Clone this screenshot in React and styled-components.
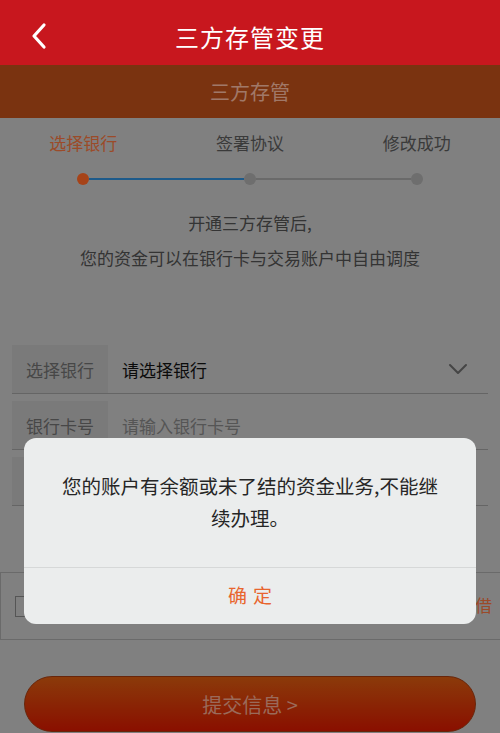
import styled, { createGlobalStyle } from "styled-components";

const GlobalStyle = createGlobalStyle`
  * { box-sizing: border-box; }
  body {
    margin: 0;
    font-family: "Noto Sans CJK SC", "Noto Sans", sans-serif;
    background: #fff;
  }
`;

const Page = styled.div`
  position: relative;
  width: 500px;
  height: 733px;
  overflow: hidden;
  background: #c5c5c5;
`;

const Header = styled.header`
  display: grid;
  grid-template-columns: 80px 1fr 80px;
  align-items: center;
  height: 65px;
  padding-top: 7px;
  background: #c8171e;
  color: #fff;
`;

const BackButton = styled.div`
  display: flex;
  align-items: center;
  padding-left: 30px;
  height: 100%;
`;

const Title = styled.h1`
  margin: 0;
  text-align: center;
  font-size: 24px;
  font-weight: 400;
  letter-spacing: 1px;
`;

const TabBar = styled.div`
  display: flex;
  align-items: center;
  justify-content: center;
  height: 53px;
  background: #bc4f19;
  color: #f6b9a0;
  font-size: 20px;
`;

const Steps = styled.section`
  padding-top: 13px;
`;

const StepLabels = styled.div`
  display: grid;
  grid-template-columns: repeat(3, 1fr);
  font-size: 17px;
  line-height: 24px;
  text-align: center;
`;

const StepLabel = styled.span`
  color: ${(p) => (p.$active ? "#ee7440" : "#5a5a5a")};
`;

const Track = styled.div`
  display: flex;
  align-items: center;
  padding: 0 77px;
  margin-top: 18px;
`;

const Dot = styled.span`
  width: 12px;
  height: 12px;
  border-radius: 50%;
  background: ${(p) => (p.$active ? "#ff6725" : "#a9a9a9")};
  flex-shrink: 0;
`;

const Line = styled.span`
  flex: 1;
  height: 2px;
  background: ${(p) => (p.$done ? "#2d8bd4" : "#a3a3a3")};
`;

const Intro = styled.p`
  margin: 20px 0 0;
  text-align: center;
  font-size: 17px;
  line-height: 35px;
  color: #505050;
`;

const Form = styled.div`
  margin: 70px 12px 0;
`;

const Row = styled.div`
  display: flex;
  align-items: center;
  height: 49px;
  margin-top: 7px;
  border-bottom: 1px solid #9c9c9c;
  &:first-child {
    margin-top: 0;
  }
`;

const RowLabel = styled.div`
  display: flex;
  align-items: center;
  width: 96px;
  height: 48px;
  padding-left: 14px;
  background: #bcbcbc;
  color: #6e6e6e;
  font-size: 17px;
`;

const RowValue = styled.div`
  flex: 1;
  padding-left: 14px;
  font-size: 17px;
  color: ${(p) => (p.$placeholder ? "#838383" : "#111")};
`;

const Chevron = styled.div`
  display: flex;
  padding-right: 20px;
`;

const AgreeRow = styled.div`
  display: flex;
  align-items: center;
  height: 68px;
  margin-top: 66px;
  padding: 0 8px 0 14px;
  border-top: 1px solid #a3a3a3;
  border-bottom: 1px solid #a3a3a3;
  border-left: 1px solid #a3a3a3;
`;

const CheckBox = styled.span`
  width: 15px;
  height: 21px;
  border: 1px solid #838383;
  flex-shrink: 0;
`;

const AgreeText = styled.span`
  flex: 1;
  overflow: hidden;
  white-space: nowrap;
  text-align: right;
  font-size: 17px;
  color: #5a5a5a;
  margin-top: -4px;
`;

const LinkText = styled.span`
  color: #ee7240;
`;

const SubmitButton = styled.button`
  display: block;
  width: 452px;
  height: 56px;
  margin: 36px auto 0;
  border: 1px solid #a03a10;
  border-radius: 28px;
  background: linear-gradient(#d65a10, #d41800);
  color: #eda38b;
  font-family: inherit;
  font-size: 20px;
`;

const Overlay = styled.div`
  position: absolute;
  top: 65px;
  left: 0;
  right: 0;
  bottom: 0;
  display: flex;
  flex-direction: column;
  align-items: center;
  padding-top: 373px;
  background: rgba(0, 0, 0, 0.35);
`;

const Dialog = styled.div`
  width: 452px;
  border-radius: 12px;
  background: #ebeded;
  overflow: hidden;
`;

const Message = styled.p`
  margin: 0;
  height: 129px;
  padding: 32px 36px 0;
  text-align: center;
  font-size: 19.5px;
  line-height: 32px;
  color: #262626;
`;

const DialogButton = styled.div`
  display: flex;
  align-items: center;
  justify-content: center;
  height: 57px;
  padding-bottom: 3px;
  border-top: 1px solid #d6d8d8;
  color: #e8652e;
  font-size: 19px;
  letter-spacing: 6px;
  padding-left: 6px;
`;

function BackIcon() {
  return (
    <svg width="18" height="28" viewBox="0 0 18 28">
      <path
        d="M14 3 L4 14 L14 25"
        fill="none"
        stroke="#fff"
        strokeWidth="3.2"
        strokeLinecap="round"
        strokeLinejoin="round"
      />
    </svg>
  );
}

function DownIcon() {
  return (
    <svg width="20" height="12" viewBox="0 0 20 12">
      <path
        d="M2 2 L10 10 L18 2"
        fill="none"
        stroke="#6a6a6a"
        strokeWidth="2"
        strokeLinecap="round"
        strokeLinejoin="round"
      />
    </svg>
  );
}

const rows = [
  { label: "选择银行", value: "请选择银行", select: true },
  { label: "银行卡号", value: "请输入银行卡号", placeholder: true },
  { label: "银行密码", value: "请输入银行密码", placeholder: true },
];

function App() {
  return (
    <Page>
      <GlobalStyle />
      <Header>
        <BackButton>
          <BackIcon />
        </BackButton>
        <Title>三方存管变更</Title>
        <span />
      </Header>
      <TabBar>三方存管</TabBar>

      <Steps>
        <StepLabels>
          <StepLabel $active>选择银行</StepLabel>
          <StepLabel>签署协议</StepLabel>
          <StepLabel>修改成功</StepLabel>
        </StepLabels>
        <Track>
          <Dot $active />
          <Line $done />
          <Dot />
          <Line />
          <Dot />
        </Track>
      </Steps>

      <Intro>
        开通三方存管后,
        <br />
        您的资金可以在银行卡与交易账户中自由调度
      </Intro>

      <Form>
        {rows.map((row) => (
          <Row key={row.label}>
            <RowLabel>{row.label}</RowLabel>
            <RowValue $placeholder={row.placeholder}>{row.value}</RowValue>
            {row.select && (
              <Chevron>
                <DownIcon />
              </Chevron>
            )}
          </Row>
        ))}
      </Form>

      <AgreeRow>
        <CheckBox />
        <AgreeText>
          我已阅读并同意<LinkText>《三方存管协议》借</LinkText>
        </AgreeText>
      </AgreeRow>

      <SubmitButton>提交信息 &gt;</SubmitButton>

      <Overlay>
        <Dialog>
          <Message>您的账户有余额或未了结的资金业务,不能继续办理。</Message>
          <DialogButton>确定</DialogButton>
        </Dialog>
      </Overlay>
    </Page>
  );
}

export default App;
